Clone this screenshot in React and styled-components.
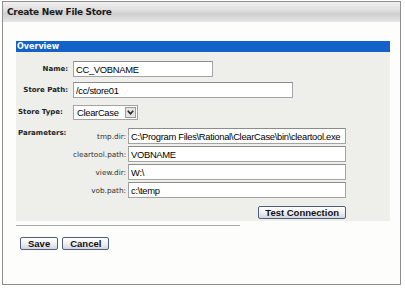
import React from 'react';
import styled, {createGlobalStyle} from 'styled-components';

const GlobalStyle = createGlobalStyle`
  html, body {
    margin: 0;
    padding: 0;
    background: #ffffff;
  }
  body {
    font-family: "DejaVu Sans", Verdana, sans-serif;
  }
`;

const Frame = styled.div`
  box-sizing: border-box;
  margin: 1px 0 0 2px;
  width: 399px;
  height: 284px;
  border: 1px solid #8e8e8e;
  background: #fdfdfc;
  display: flex;
  flex-direction: column;
`;

const Header = styled.div`
  height: 20px;
  display: flex;
  align-items: center;
  padding-left: 4px;
  background: linear-gradient(#f2f2f2 0%, #dcdcdc 45%, #cfcfcf 60%, #e6e6e6 100%);
  font-weight: bold;
  font-size: 9px;
  letter-spacing: -0.3px;
  color: #1a1a1a;
`;

const Body = styled.div`
  padding: 19px 0 0 13px;
`;

const Section = styled.div`
  width: 374px;
`;

const SectionBar = styled.div`
  height: 11px;
  line-height: 11px;
  background: #1262c9;
  color: #ffffff;
  font-weight: bold;
  font-size: 8px;
  padding-left: 1px;
`;

const Panel = styled.div`
  box-sizing: border-box;
  height: 169px;
  background: #eeeeeb;
  padding: 9px 0 0 2px;
  display: grid;
  grid-template-columns: 50px 1fr;
  column-gap: 5px;
  row-gap: 5px;
  align-content: start;
`;

const Label = styled.div`
  font-size: 7px;
  font-weight: bold;
  color: #222;
  text-align: ${p => (p.$left ? 'left' : 'right')};
  align-self: ${p => (p.$top ? 'start' : 'center')};
  padding-top: ${p => (p.$top ? '4px' : '0')};
  white-space: nowrap;
`;

const Field = styled.input`
  box-sizing: border-box;
  width: ${p => p.$w}px;
  height: 16px;
  margin: 0;
  padding: 0 2px;
  border: 1px solid #a3a3a3;
  border-top-color: #8c8c8c;
  background: #ffffff;
  font-family: "Liberation Sans", Arial, sans-serif;
  font-size: 9.4px;
  letter-spacing: -0.3px;
  color: #000;
  outline: none;
`;

const SelectBox = styled.div`
  box-sizing: border-box;
  width: 65px;
  height: 15px;
  margin-top: 2px;
  border: 1px solid #a3a3a3;
  background: #ffffff;
  display: flex;
  align-items: center;
  justify-content: space-between;
  padding-left: 3px;
  font-family: "Liberation Sans", Arial, sans-serif;
  font-size: 9.4px;
  letter-spacing: -0.3px;
`;

const ArrowBtn = styled.div`
  box-sizing: border-box;
  width: 11px;
  height: 11px;
  margin-right: 1px;
  border: 1px solid #9a9a9a;
  background: #e4e4e4;
  display: flex;
  align-items: center;
  justify-content: center;
`;

const Params = styled.div`
  margin-top: 3px;
  display: grid;
  grid-template-columns: 53px 218px;
  column-gap: 2px;
  row-gap: 2px;
  align-items: center;
`;

const ParamLabel = styled.div`
  font-size: 7.3px;
  color: #333;
  text-align: right;
  white-space: nowrap;
`;

const TestRow = styled.div`
  grid-column: 1 / span 2;
  display: flex;
  justify-content: flex-end;
  width: 273px;
  margin-top: 6px;
`;

const Button = styled.button`
  box-sizing: border-box;
  height: 13px;
  padding: 0 ${p => p.$pad || 7}px;
  margin: 0;
  border: 1px solid #4f5f7f;
  border-radius: 2px;
  background: linear-gradient(#ffffff 0%, #f0f0f4 50%, #d4d4de 100%);
  font-family: "Liberation Sans", Arial, sans-serif;
  font-weight: bold;
  font-size: 9.5px;
  line-height: 11px;
  color: #111;
  white-space: nowrap;
`;

const Separator = styled.div`
  width: 224px;
  height: 1px;
  margin-top: 4px;
  background: #a8a8a8;
`;

const Actions = styled.div`
  display: flex;
  gap: 4px;
  margin: 11px 0 0 4px;
`;

const Chevron = () => (
  <svg width="7" height="5" viewBox="0 0 7 5">
    <path d="M0.8 0.8 L3.5 3.8 L6.2 0.8" fill="none" stroke="#222" strokeWidth="1.6" />
  </svg>
);

const params = [
  ['tmp.dir:', 'C:\\Program Files\\Rational\\ClearCase\\bin\\cleartool.exe'],
  ['cleartool.path:', 'VOBNAME'],
  ['view.dir:', 'W:\\'],
  ['vob.path:', 'c:\\temp'],
];

export default function App() {
  return (
    <>
      <GlobalStyle />
      <Frame>
        <Header>Create New File Store</Header>
        <Body>
          <Section>
            <SectionBar>Overview</SectionBar>
            <Panel>
              <Label>Name:</Label>
              <Field $w={140} defaultValue="CC_VOBNAME" />

              <Label>Store Path:</Label>
              <Field $w={220} defaultValue="/cc/store01" />

              <Label $left>Store Type:</Label>
              <SelectBox>
                ClearCase
                <ArrowBtn><Chevron /></ArrowBtn>
              </SelectBox>

              <Label $left $top>Parameters:</Label>
              <Params>
                {params.map(([k, v]) => (
                  <React.Fragment key={k}>
                    <ParamLabel>{k}</ParamLabel>
                    <Field $w={218} defaultValue={v} />
                  </React.Fragment>
                ))}
                <TestRow>
                  <Button $pad={6}>Test Connection</Button>
                </TestRow>
              </Params>
            </Panel>
          </Section>
          <Separator />
          <Actions>
            <Button>Save</Button>
            <Button>Cancel</Button>
          </Actions>
        </Body>
      </Frame>
    </>
  );
}
